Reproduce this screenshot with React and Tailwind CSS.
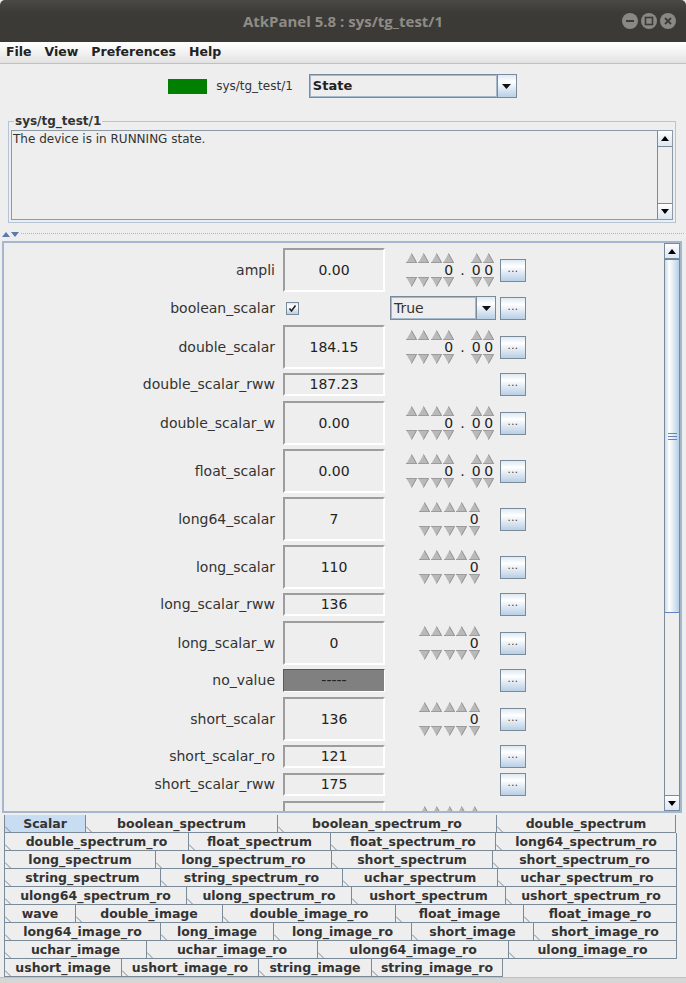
import React from "react";

const rows = [
  { name: "ampli", kind: "big", value: "0.00", spin: "float" },
  { name: "boolean_scalar", kind: "bool" },
  { name: "double_scalar", kind: "big", value: "184.15", spin: "float" },
  { name: "double_scalar_rww", kind: "small", value: "187.23" },
  { name: "double_scalar_w", kind: "big", value: "0.00", spin: "float" },
  { name: "float_scalar", kind: "big", value: "0.00", spin: "float" },
  { name: "long64_scalar", kind: "big", value: "7", spin: "int" },
  { name: "long_scalar", kind: "big", value: "110", spin: "int" },
  { name: "long_scalar_rww", kind: "small", value: "136" },
  { name: "long_scalar_w", kind: "big", value: "0", spin: "int" },
  { name: "no_value", kind: "none", value: "-----" },
  { name: "short_scalar", kind: "big", value: "136", spin: "int" },
  { name: "short_scalar_ro", kind: "small", value: "121" },
  { name: "short_scalar_rww", kind: "small", value: "175" },
  // next row, scrolled below the fold: only its top edge shows
  { name: "", kind: "big", value: "", spin: "int", blank: true },
];

const tabRows = [
  [["Scalar", 82, true], ["boolean_spectrum", 192], ["boolean_spectrum_ro", 219], ["double_spectrum", 179]],
  [["double_spectrum_ro", 184], ["float_spectrum", 142], ["float_spectrum_ro", 165], ["long64_spectrum_ro", 181]],
  [["long_spectrum", 151], ["long_spectrum_ro", 176], ["short_spectrum", 161], ["short_spectrum_ro", 184]],
  [["string_spectrum", 156], ["string_spectrum_ro", 182], ["uchar_spectrum", 155], ["uchar_spectrum_ro", 179]],
  [["ulong64_spectrum_ro", 182], ["ulong_spectrum_ro", 165], ["ushort_spectrum", 154], ["ushort_spectrum_ro", 171]],
  [["wave", 71], ["double_image", 147], ["double_image_ro", 173], ["float_image", 128], ["float_image_ro", 153]],
  [["long64_image_ro", 156], ["long_image", 113], ["long_image_ro", 138], ["short_image", 122], ["short_image_ro", 143]],
  [["uchar_image", 142], ["uchar_image_ro", 171], ["ulong64_image_ro", 191], ["ulong_image_ro", 168]],
  [["ushort_image", 117], ["ushort_image_ro", 137], ["string_image", 113], ["string_image_ro", 131]],
];

function ArrowUp({ color = "#000" }) {
  return (
    <svg width="8" height="5" viewBox="0 0 8 5">
      <polygon points="4,0 8,5 0,5" fill={color} />
    </svg>
  );
}

function ArrowDown({ color = "#000" }) {
  return (
    <svg width="8" height="5" viewBox="0 0 8 5">
      <polygon points="0,0 8,0 4,5" fill={color} />
    </svg>
  );
}

// little grey wheel-switch triangles
function SpinUp() {
  return (
    <svg width="11" height="10" viewBox="0 0 11 10" className="block">
      <polygon points="5.5,0.5 10.5,9.5 0.5,9.5" fill="#b9b9b9" />
      <polyline points="5.5,0.5 10.5,9.5" fill="none" stroke="#8f8f8f" strokeWidth="1" />
      <line x1="0" y1="9.5" x2="11" y2="9.5" stroke="#9c9c9c" strokeWidth="1" />
    </svg>
  );
}

function SpinDown() {
  return (
    <svg width="11" height="10" viewBox="0 0 11 10" className="block">
      <polygon points="0.5,0.5 10.5,0.5 5.5,9.5" fill="#b9b9b9" />
      <polyline points="10.5,0.5 5.5,9.5" fill="none" stroke="#8f8f8f" strokeWidth="1" />
      <line x1="0" y1="0.5" x2="11" y2="0.5" stroke="#9c9c9c" strokeWidth="1" />
    </svg>
  );
}

function Digit({ d }) {
  return (
    <div className="w-[12.5px] flex flex-col items-center">
      <SpinUp />
      <div className="h-[14px] leading-[14px] text-[14px] text-[#222]">{d}</div>
      <SpinDown />
    </div>
  );
}

function Spinner({ type, blank }) {
  if (type === "float") {
    return (
      <div className="flex ml-[20px]">
        <Digit d="" />
        <Digit d="" />
        <Digit d="" />
        <Digit d="0" />
        <div className="w-[15px] flex items-center justify-center text-[14px] text-[#222]">.</div>
        <Digit d="0" />
        <Digit d="0" />
      </div>
    );
  }
  return (
    <div className="flex ml-[33px]">
      <Digit d="" />
      <Digit d="" />
      <Digit d="" />
      <Digit d="" />
      <Digit d={blank ? "" : "0"} />
    </div>
  );
}

function DotsButton() {
  return (
    <div className="w-[26px] h-[23px] border border-[#7a8a99] bg-[linear-gradient(to_bottom,#dde8f3_0%,#ffffff_30%,#b8cfe5_100%)] flex items-center justify-center text-[10px] leading-none text-[#333] tracking-[0.5px] pb-[3px]">
      ...
    </div>
  );
}

function Field({ value, big, dark }) {
  if (dark) {
    return (
      <div className="w-[102px] h-[23px] border border-t-[#5a5a5a] border-l-[#5a5a5a] border-b-[#ffffff] border-r-[#ffffff] bg-[#808080] flex items-center justify-center text-[14px] text-[#222]">
        {value}
      </div>
    );
  }
  return (
    <div
      className={
        big
          ? "w-[102px] h-[44px] border-2 border-t-[#9d9d9d] border-l-[#9d9d9d] border-b-[#ffffff] border-r-[#ffffff] flex items-center justify-center text-[14px] text-[#222]"
          : "w-[102px] h-[23px] border-2 border-t-[#9d9d9d] border-l-[#9d9d9d] border-b-[#ffffff] border-r-[#ffffff] flex items-center justify-center text-[14px] text-[#222]"
      }
    >
      {value}
    </div>
  );
}

function Label({ name }) {
  return <div className="w-[271px] text-right text-[14px] text-[#333] whitespace-nowrap">{name}</div>;
}

function Row({ r }) {
  if (r.kind === "bool") {
    return (
      <div className="flex items-center h-[24px] mt-[1px] mb-[5px]">
        <Label name={r.name} />
        <div className="w-[102px] ml-[8px] flex items-center">
          <div className="ml-[3px] w-[13px] h-[13px] border border-[#7a8a99] bg-[linear-gradient(to_bottom,#dde8f3,#ffffff_30%,#b8cfe5)] flex items-center justify-center">
            <svg width="9" height="9" viewBox="0 0 9 9">
              <path d="M1.5 4.5 L3.5 7 L7.5 1.5" fill="none" stroke="#222" strokeWidth="1.6" />
            </svg>
          </div>
        </div>
        <div className="ml-[5px] w-[106px] h-[24px] border border-[#7a8a99] flex bg-[#eeeeee]">
          <div className="flex-1 border border-[#a3b8cc] flex items-center pl-[2px] text-[14px] text-[#333]">True</div>
          <div className="w-[19px] border-l border-[#7a8a99] bg-[linear-gradient(to_bottom,#dde8f3,#ffffff_30%,#b8cfe5)] flex items-center justify-center">
            <svg width="9" height="5" viewBox="0 0 9 5"><polygon points="0,0 9,0 4.5,5" fill="#111" /></svg>
          </div>
        </div>
        <div className="ml-[4px]"><DotsButton /></div>
      </div>
    );
  }
  if (r.kind === "big") {
    return (
      <div className="flex items-center h-[44px] mb-[4px]">
        <Label name={r.name} />
        <div className="ml-[8px]"><Field value={r.value} big /></div>
        <div className="w-[115px] flex items-center">{r.spin && <Spinner type={r.spin} blank={r.blank} />}</div>
        {!r.blank && <DotsButton />}
      </div>
    );
  }
  return (
    <div className="flex items-center h-[23px] mb-[5px]">
      <Label name={r.name} />
      <div className="ml-[8px]"><Field value={r.value} dark={r.kind === "none"} /></div>
      <div className="w-[115px]" />
      <DotsButton />
    </div>
  );
}

function ScrollButton({ up }) {
  return (
    <div className="h-[16px] border border-[#7a8a99] bg-[linear-gradient(to_bottom,#ffffff,#eef3f9_40%,#dde8f3)] flex items-center justify-center shrink-0">
      {up ? <ArrowUp /> : <ArrowDown />}
    </div>
  );
}

function MainScrollbar() {
  return (
    <div className="w-[16px] flex flex-col bg-[#eeeeee]">
      <ScrollButton up />
      <div className="flex-1 flex flex-col border-l border-r border-[#7a8a99]">
        <div className="h-[354px] border-t border-b border-[#6382bf] bg-[linear-gradient(to_right,#c8dcef,#ffffff_30%,#b8cfe5)] flex items-center justify-center">
          <div className="flex flex-col gap-[2px]">
            <div className="w-[9px] h-[1px] bg-[#6382bf]" />
            <div className="w-[9px] h-[1px] bg-[#6382bf]" />
            <div className="w-[9px] h-[1px] bg-[#6382bf]" />
          </div>
        </div>
        <div className="flex-1 bg-[#eeeeee]" />
      </div>
      <ScrollButton />
    </div>
  );
}

function Tab({ label, width, selected }) {
  return (
    <div
      style={{ width }}
      className={
        selected
          ? "relative h-[18px] shrink-0 border-r border-b border-[#7a8a99] bg-[#c8ddf2] flex items-center justify-center pt-[1px]"
          : "relative h-[18px] shrink-0 border-r border-b border-[#7a8a99] bg-[#eeeeee] flex items-center justify-center pt-[1px]"
      }
    >
      <svg width="6" height="6" viewBox="0 0 6 6" className="absolute left-0 bottom-0">
        <line x1="0" y1="0.5" x2="5.5" y2="6" stroke="#7a8a99" strokeWidth="1" />
      </svg>
      <span className="whitespace-nowrap text-[12.5px] leading-[14px] font-bold text-[#333]">{label}</span>
    </div>
  );
}

export default function App() {
  return (
    <div className="w-[686px] h-[983px] bg-[#eeeeee] flex flex-col overflow-hidden font-['DejaVu_Sans',sans-serif]">
      {/* window title */}
      <div className="h-[42px] shrink-0 rounded-t-[5px] bg-[linear-gradient(to_bottom,#4a4945,#3c3b37_30%,#3a3935)] grid grid-cols-[1fr_auto_1fr] items-center">
        <div />
        <div className="font-['Open_Sans',sans-serif] font-bold text-[15px] text-[#8f8c86]">AtkPanel 5.8 : sys/tg_test/1</div>
        <div className="flex justify-end gap-[1px] pr-[9px]">
          <svg width="18" height="18" viewBox="0 0 18 18">
            <circle cx="9" cy="9" r="8" fill="#8a8883" />
            <line x1="5" y1="9" x2="13" y2="9" stroke="#3c3b37" strokeWidth="2" />
          </svg>
          <svg width="18" height="18" viewBox="0 0 18 18">
            <circle cx="9" cy="9" r="8" fill="#8a8883" />
            <rect x="5.5" y="5.5" width="7" height="7" fill="none" stroke="#3c3b37" strokeWidth="1.6" />
          </svg>
          <svg width="18" height="18" viewBox="0 0 18 18">
            <circle cx="9" cy="9" r="8" fill="#8a8883" />
            <path d="M6 6 L12 12 M12 6 L6 12" stroke="#3c3b37" strokeWidth="1.8" />
          </svg>
        </div>
      </div>

      {/* menu bar */}
      <div className="h-[22px] shrink-0 bg-[linear-gradient(to_bottom,#ffffff,#f2f2f2_50%,#e2e2e2)] border-b border-[#b5c2d0] flex items-center text-[12.5px] font-bold text-[#222]">
        <span className="pl-[6px] pr-[6.5px]">File</span>
        <span className="px-[6.5px]">View</span>
        <span className="px-[6.5px]">Preferences</span>
        <span className="px-[6.5px]">Help</span>
      </div>

      {/* device state */}
      <div className="h-[56px] shrink-0 flex items-start justify-center pt-[10px] pr-[1px]">
        <div className="flex items-center h-[24px]">
          <div className="w-[39px] h-[15px] bg-[#007f00]" />
          <span className="ml-[9px] text-[12px] text-[#333]">sys/tg_test/1</span>
          <div className="ml-[16px] w-[208px] h-[24px] border border-[#7a8a99] flex">
            <div className="flex-1 border border-[#a3b8cc] flex items-center pl-[2px] text-[13px] font-bold text-[#222]">State</div>
            <div className="w-[19px] border-l border-[#7a8a99] bg-[linear-gradient(to_bottom,#dde8f3,#ffffff_30%,#b8cfe5)] flex items-center justify-center">
              <svg width="9" height="5" viewBox="0 0 9 5"><polygon points="0,0 9,0 4.5,5" fill="#111" /></svg>
            </div>
          </div>
        </div>
      </div>

      {/* status box */}
      <div className="relative mt-[1px] mx-[8px] mr-[10px] h-[102px] shrink-0 border border-[#b5c5d8] pt-[8px] px-[2px] pb-[2px]">
        <span className="absolute left-[5px] top-[-8px] bg-[#eeeeee] px-[1px] text-[12px] font-bold leading-[14px] text-[#333]">sys/tg_test/1</span>
        <div className="h-full border border-[#8c99a6] flex">
          <div className="flex-1 pl-[1px] pt-[1px] text-[12px] leading-[15px] text-[#333]">The device is in RUNNING state.</div>
          <div className="w-[15px] flex flex-col border-l border-[#7a8a99]">
            <div className="h-[16px] border-b border-[#7a8a99] bg-[linear-gradient(to_bottom,#ffffff,#eef3f9_40%,#dde8f3)] flex items-center justify-center"><ArrowUp /></div>
            <div className="flex-1" />
            <div className="h-[16px] border-t border-[#7a8a99] bg-[linear-gradient(to_bottom,#ffffff,#eef3f9_40%,#dde8f3)] flex items-center justify-center"><ArrowDown /></div>
          </div>
        </div>
      </div>

      {/* split divider */}
      <div className="h-[18px] shrink-0 flex items-center px-[2px] pt-[4px]">
        <div className="flex items-center gap-[1px] mr-[2px]">
          <svg width="8" height="5" viewBox="0 0 8 5"><polygon points="4,0 8,5 0,5" fill="#5b7aa8" /></svg>
          <svg width="8" height="5" viewBox="0 0 8 5"><polygon points="0,0 8,0 4,5" fill="#5b7aa8" /></svg>
        </div>
        <div className="flex-1 h-[2px] border-t border-dotted border-[#a9b6c6]" />
      </div>

      {/* attribute panel */}
      <div className="h-[572px] shrink-0 mx-[2px] mr-[4px] border-[2px] border-[#a3b8cc] flex overflow-hidden">
        <div className="flex-1 overflow-hidden pt-[5px]">
          {rows.map((r, i) => (
            <Row key={i} r={r} />
          ))}
        </div>
        <MainScrollbar />
      </div>

      {/* tabs */}
      <div className="shrink-0 pl-[4px] pt-[2px]">
        {tabRows.map((tr, i) => (
          <div key={i} className="flex">
            <div className="w-[1px] h-[18px] bg-[#7a8a99]" />
            {tr.map(([label, w, sel]) => (
              <Tab key={label} label={label} width={i === 0 && sel ? w - 1 : w} selected={sel} />
            ))}
          </div>
        ))}
      </div>
      <div className="flex-1 border-t border-[#c0c0c0] bg-[#d6d6d6]" />
    </div>
  );
}
